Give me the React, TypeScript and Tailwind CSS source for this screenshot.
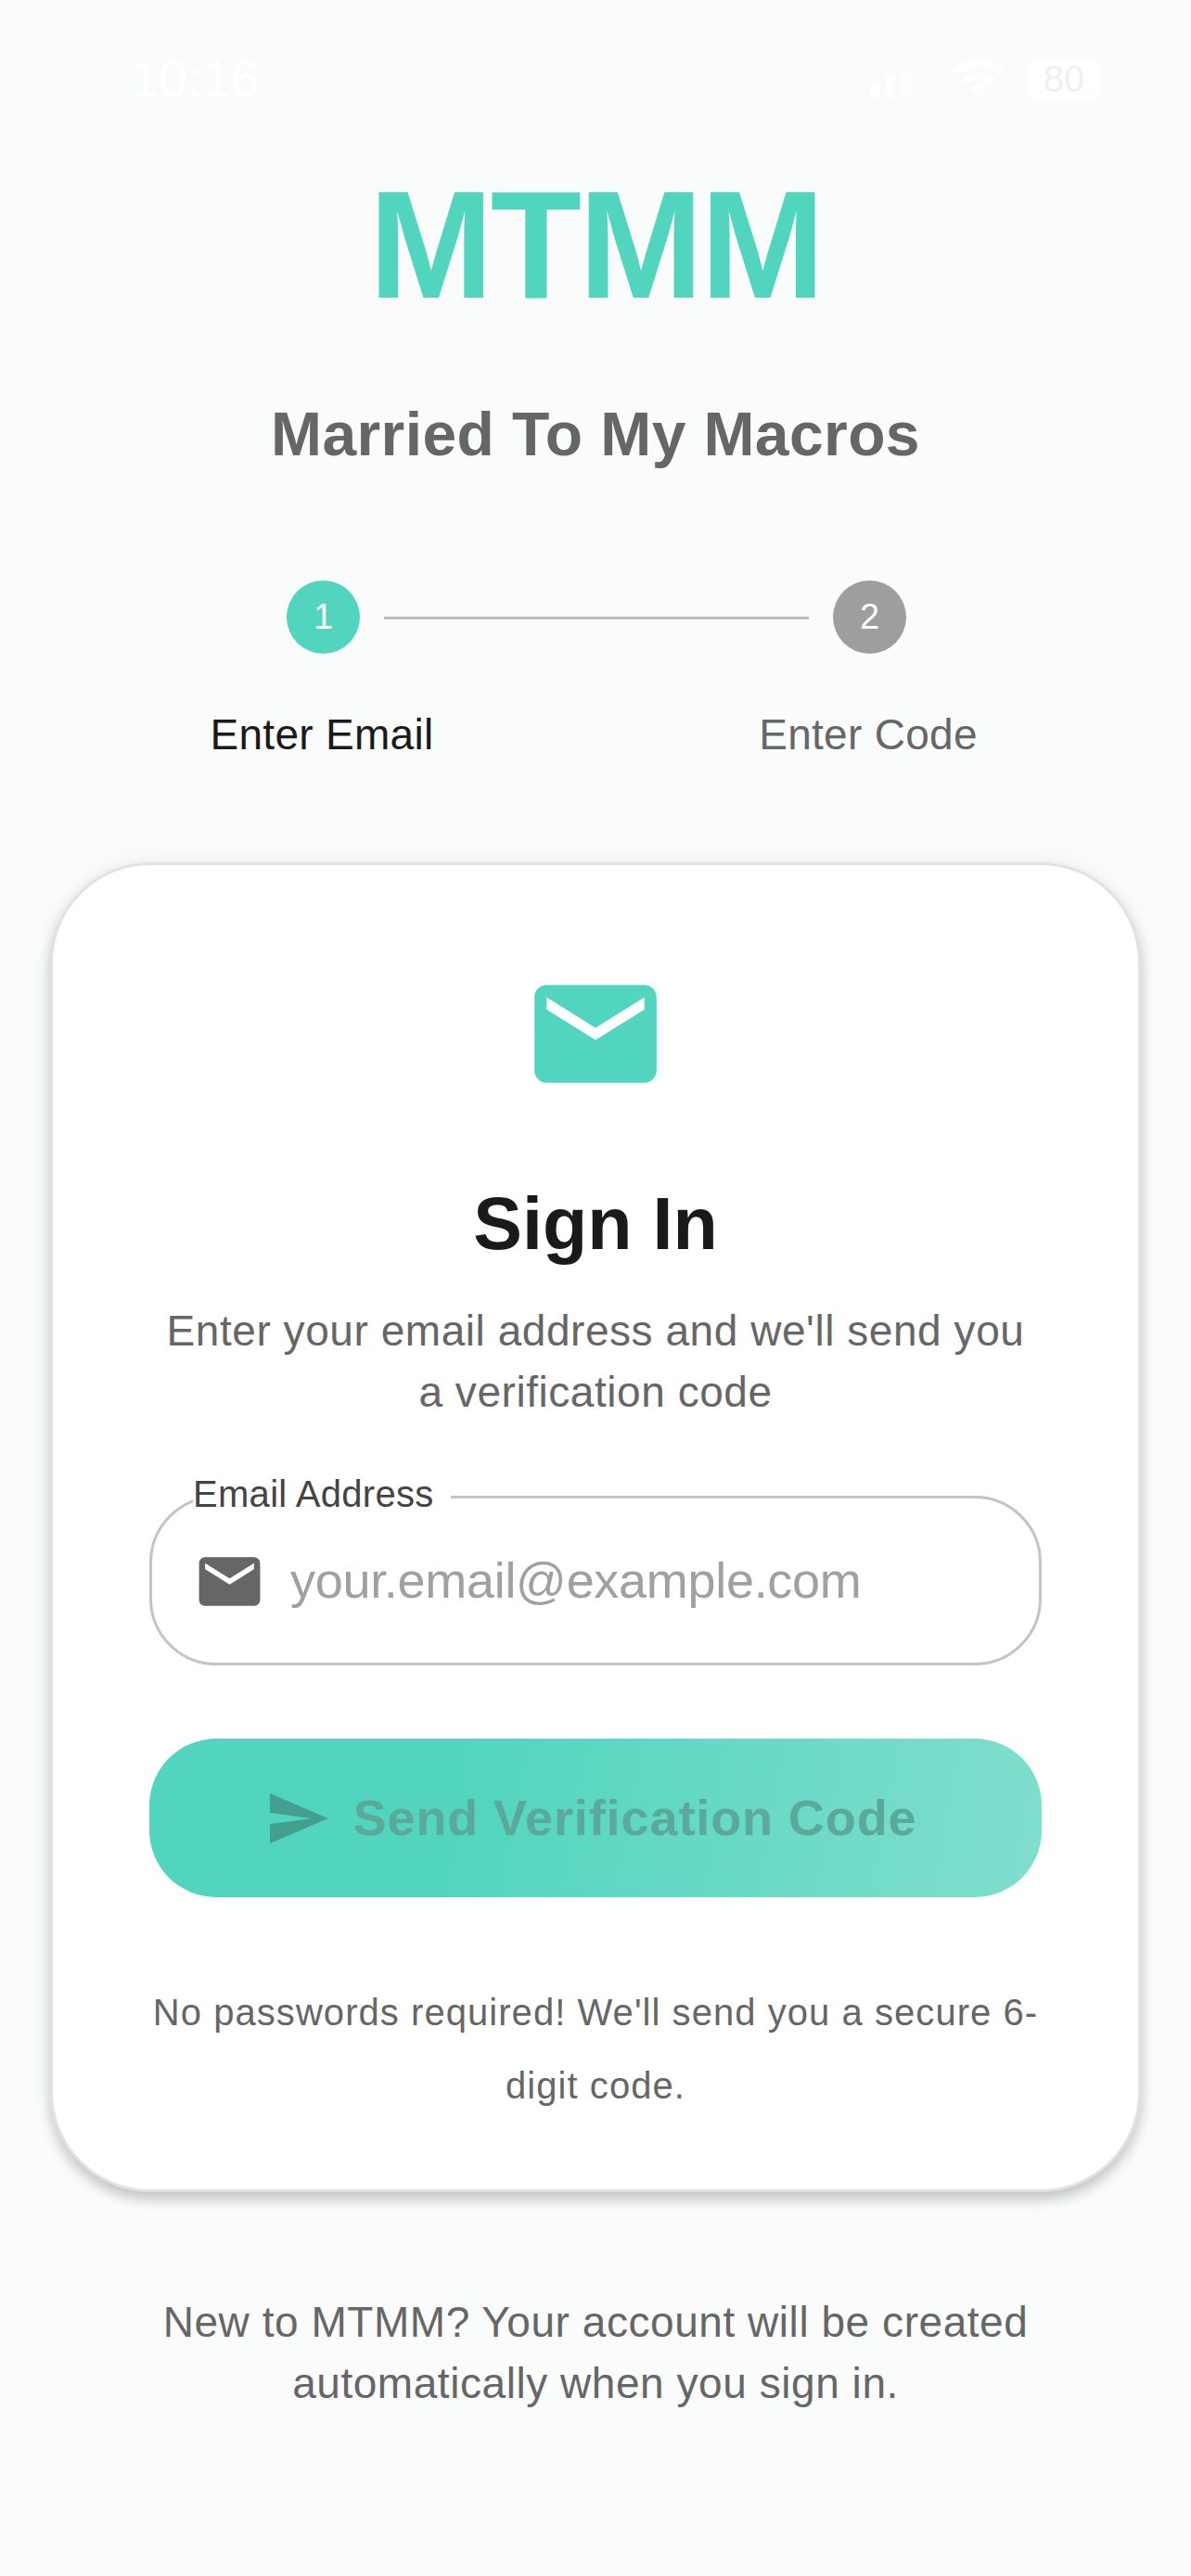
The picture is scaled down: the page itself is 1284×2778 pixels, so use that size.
const MAIL_PATH =
  'M20 4H4c-1.1 0-1.99.9-1.99 2L2 18c0 1.1.9 2 2 2h16c1.1 0 2-.9 2-2V6c0-1.1-.9-2-2-2zm0 4l-8 5-8-5V6l8 5 8-5v2z';
const SEND_PATH = 'M2.01 21L23 12 2.01 3 2 10l15 2-15 2z';

function StatusBar() {
  return (
    <div className="flex h-[46px] items-center justify-between pl-[140px] pr-[97px] text-white">
      <span className="text-[55px] leading-none font-medium tracking-[0.5px]">10:16</span>
      <div className="flex items-center">
        <svg width="62" height="40" viewBox="0 0 62 40" fill="currentColor">
          <rect x="0" y="26" width="10" height="14" rx="2" />
          <rect x="17" y="17" width="10" height="23" rx="2" />
          <rect x="34" y="9" width="10" height="31" rx="2" opacity="0.35" />
          <rect x="51" y="0" width="10" height="40" rx="2" opacity="0.2" />
        </svg>
        <svg className="ml-[27px]" width="56" height="42" viewBox="0 0 56 42" fill="currentColor">
          <path d="M28 0C17 0 8 4 1 11l5 6c6-5 14-9 22-9s16 4 22 9l5-6C48 4 39 0 28 0z" />
          <path d="M28 14c-7 0-13 3-17 7l5 6c3-3 8-5 12-5s9 2 12 5l5-6c-4-4-10-7-17-7z" />
          <path d="M28 28c-4 0-7 1-9 4l9 10 9-10c-2-3-5-4-9-4z" />
        </svg>
        <div className="ml-[24px] flex h-[46px] w-[80px] items-center justify-center rounded-[14px] bg-white text-[40px] text-[#eef1f1]">
          80
        </div>
      </div>
    </div>
  );
}

function Step({ num, label, active }: { num: number; label: string; active: boolean }) {
  return (
    <div className="flex w-[79px] flex-col items-center">
      <div
        className={`flex h-[79px] w-[79px] items-center justify-center rounded-full text-[38px] text-white ${
          active ? 'bg-[#52d5bf]' : 'bg-[#9e9e9e]'
        }`}
      >
        {num}
      </div>
      <span
        className={`mt-[60px] pr-[3px] text-[46px] leading-[54px] tracking-[0.3px] whitespace-nowrap ${
          active ? 'text-[#1a1a1a]' : 'text-[#666666]'
        }`}
      >
        {label}
      </span>
    </div>
  );
}

export default function App() {
  return (
    <div className="min-h-[2778px] w-[1284px] overflow-hidden bg-[#fafcfc] pt-[62px] font-['Liberation_Sans',Arial,sans-serif]">
      <StatusBar />

      <h1 className="mt-[76px] scale-x-[0.975] text-center text-[165px] leading-[160px] font-bold tracking-[-3px] text-[#52d5bf]">
        MTMM
      </h1>
      <p className="mt-[86px] text-center text-[66px] leading-[76px] font-bold tracking-[0.4px] text-[#666666]">
        Married To My Macros
      </p>

      {/* Stepper */}
      <div className="mt-[120px] flex justify-center pl-[2px]">
        <Step num={1} label="Enter Email" active />
        <div className="mx-[26px] mt-[39px] h-[3px] w-[458px] bg-[#bbbbbb]" />
        <Step num={2} label="Enter Code" active={false} />
      </div>

      {/* Card */}
      <div className="mx-[54px] mt-[111px] h-[1434px] rounded-[108px] border-[3px] border-[#e2e2e2] bg-white px-[104px] pt-[103px] shadow-[0_8px_14px_rgba(0,0,0,0.2),0_0_24px_rgba(0,0,0,0.05)]">
        <div className="flex justify-center">
          <svg width="158" height="158" viewBox="0 0 24 24" fill="#52d5bf">
            <path d={MAIL_PATH} />
          </svg>
        </div>

        <h2 className="mt-[81px] text-center text-[79px] leading-[90px] font-bold text-[#1a1a1a]">Sign In</h2>
        <p className="mt-[37px] text-center text-[46px] leading-[66px] tracking-[0.55px] text-[#666666]">
          Enter your email address and we'll send you a verification code
        </p>

        {/* Input */}
        <div className="relative mt-[79px] flex h-[183px] items-center rounded-[72px] border-[3px] border-[#c4c4c4] pl-[44px]">
          <span className="absolute top-[-30px] left-[44px] bg-white pr-[18px] text-[40px] leading-[50px] tracking-[0.3px] text-[#444444]">
            Email Address
          </span>
          <svg className="mt-[2px]" width="79" height="79" viewBox="0 0 24 24" fill="#666666">
            <path d={MAIL_PATH} />
          </svg>
          <span className="ml-[26px] text-[54px] tracking-[-0.3px] text-[#a0a0a0]">your.email@example.com</span>
        </div>

        {/* Send button */}
        <div className="mt-[79px] flex h-[171px] items-center justify-center rounded-[72px] bg-[linear-gradient(100deg,#52d5bf_0%,#52d5bf_35%,#80decd_100%)] pr-[11px]">
          <svg width="72" height="72" viewBox="0 0 24 24" fill="#43a08f">
            <path d={SEND_PATH} />
          </svg>
          <span className="ml-[24px] text-[54px] font-bold tracking-[0.9px] text-[#5aa99b]">
            Send Verification Code
          </span>
        </div>

        <p className="mt-[85px] text-center text-[40px] leading-[79px] tracking-[1.05px] text-[#666666]">
          No passwords required! We'll send you a secure 6-digit code.
        </p>
      </div>

      <p className="mx-[150px] mt-[107px] text-center text-[46px] leading-[66px] tracking-[0.55px] text-[#666666]">
        New to MTMM? Your account will be created automatically when you sign in.
      </p>
    </div>
  );
}
